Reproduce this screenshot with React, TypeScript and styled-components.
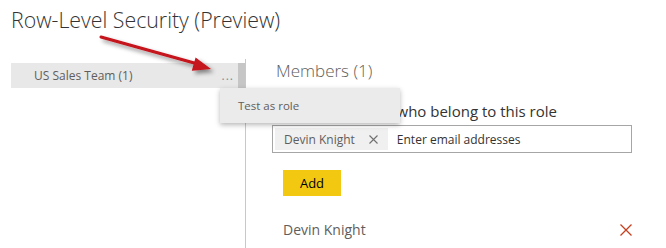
import React from "react";
import styled, { createGlobalStyle } from "styled-components";

const GlobalStyle = createGlobalStyle`
  body {
    margin: 0;
    background: #ffffff;
    font-family: "Open Sans", "Liberation Sans", sans-serif;
  }
`;

const Page = styled.div`
  position: relative;
  width: 666px;
  height: 248px;
  overflow: hidden;
  background: #ffffff;
`;

const Title = styled.h1`
  margin: 0;
  height: 59px;
  padding: 5px 0 0 11px;
  box-sizing: border-box;
  font-size: 21.3px;
  line-height: 30px;
  font-weight: 300;
  color: #333333;
`;

const Body = styled.div`
  display: flex;
  height: 189px;
`;

const Sidebar = styled.div`
  width: 234px;
  margin-left: 11px;
  padding-top: 4px;
  border-right: 1px solid #c8c8c8;
`;

const RoleRow = styled.div`
  position: relative;
  display: flex;
  height: 25px;
  background: #e8e8e8;
`;

const RoleName = styled.div`
  flex: 1;
  padding-left: 23px;
  font-size: 12px;
  line-height: 25px;
  color: #605e5c;
`;

const Dots = styled.div`
  padding-right: 4px;
  font-size: 12px;
  line-height: 25px;
  letter-spacing: 1px;
  color: #7b8c9c;
`;

const Thumb = styled.div`
  width: 7px;
  background: #c6c6c6;
`;

const Menu = styled.div`
  position: absolute;
  top: 25px;
  left: 209px;
  z-index: 2;
  width: 180px;
  height: 35px;
  padding-left: 18px;
  box-sizing: border-box;
  background: #ebebeb;
  box-shadow: 0 2px 5px rgba(0, 0, 0, 0.28);
  font-size: 11.5px;
  line-height: 35px;
  color: #605e5c;
`;

const Main = styled.div`
  flex: 1;
  padding-left: 26px;
`;

const Heading = styled.h2`
  margin: 0 0 0 4px;
  font-size: 17px;
  line-height: 24px;
  font-weight: 300;
  color: #605e5c;
`;

const Label = styled.div`
  margin: 18px 0 0 1px;
  font-size: 15px;
  line-height: 20px;
  color: #333333;
`;

const InputBox = styled.div`
  display: flex;
  align-items: center;
  width: 360px;
  height: 28px;
  margin-top: 4px;
  padding: 2px;
  box-sizing: border-box;
  border: 1px solid #a6a6a6;
`;

const Chip = styled.div`
  display: flex;
  align-items: center;
  gap: 14px;
  height: 22px;
  padding: 0 10px 0 9px;
  background: #f0f0f0;
  font-size: 12px;
  color: #605e5c;
`;

const Placeholder = styled.div`
  margin-left: 9px;
  font-size: 12px;
  color: #333333;
`;

const AddButton = styled.button`
  display: block;
  width: 58px;
  height: 26px;
  margin: 17px 0 0 11px;
  padding: 0;
  border: none;
  background: #f2c811;
  font-family: inherit;
  font-size: 13px;
  color: #000000;
`;

const MemberRow = styled.div`
  display: flex;
  align-items: center;
  justify-content: space-between;
  width: 349px;
  height: 23px;
  margin: 22px 0 0 11px;
`;

const MemberName = styled.div`
  font-size: 14px;
  color: #605e5c;
`;

const Arrow = styled.svg`
  position: absolute;
  left: 0;
  top: 0;
  pointer-events: none;
  z-index: 3;
`;

const Cross = ({ size, color, width }: { size: number; color: string; width: number }) => (
  <svg width={size} height={size} viewBox={`0 0 ${size} ${size}`}>
    <path d={`M0.5 0.5 L${size - 0.5} ${size - 0.5} M${size - 0.5} 0.5 L0.5 ${size - 0.5}`} stroke={color} strokeWidth={width} fill="none" />
  </svg>
);

export default function App() {
  return (
    <Page>
      <GlobalStyle />
      <Title>Row-Level Security (Preview)</Title>
      <Body>
        <Sidebar>
          <RoleRow>
            <RoleName>US Sales Team (1)</RoleName>
            <Dots>...</Dots>
            <Thumb />
            <Menu>Test as role</Menu>
          </RoleRow>
        </Sidebar>
        <Main>
          <Heading>Members (1)</Heading>
          <Label>People or groups who belong to this role</Label>
          <InputBox>
            <Chip>
              Devin Knight
              <Cross size={9} color="#707070" width={1.1} />
            </Chip>
            <Placeholder>Enter email addresses</Placeholder>
          </InputBox>
          <AddButton>Add</AddButton>
          <MemberRow>
            <MemberName>Devin Knight</MemberName>
            <Cross size={12} color="#c4401f" width={1.3} />
          </MemberRow>
        </Main>
      </Body>
      <Arrow width="666" height="248">
        <defs>
          <filter id="shadow" x="-20%" y="-50%" width="140%" height="200%">
            <feDropShadow dx="3" dy="3" stdDeviation="2" floodColor="#000" floodOpacity="0.45" />
          </filter>
        </defs>
        <g filter="url(#shadow)">
          <line x1="101" y1="37" x2="196" y2="63.5" stroke="#c4121a" strokeWidth="3" strokeLinecap="round" />
          <polygon points="211,69 191.8,70.8 195.6,57.4" fill="#c4121a" />
        </g>
      </Arrow>
    </Page>
  );
}
